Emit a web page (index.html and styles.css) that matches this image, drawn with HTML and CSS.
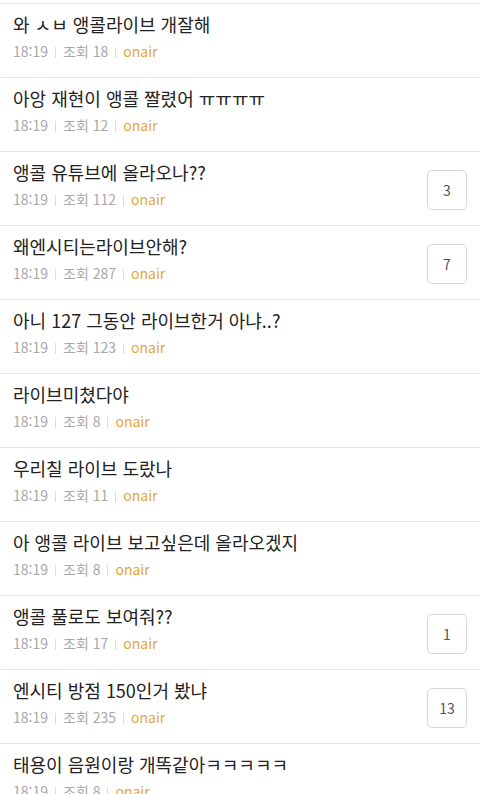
FILE: index.html
```html
<!DOCTYPE html>
<html lang="ko">
<head>
  <meta charset="UTF-8" />
  <title>게시판</title>
  <link rel="stylesheet" href="styles.css">
</head>
<body>
  <ul class="lista">
    <li class="post"><div class="cuerpo"><p class="titulo">와 ㅅㅂ 앵콜라이브 개잘해</p><p class="meta"><span>18:19</span><span>조회 18</span><span class="autor">onair</span></p></div></li>
    <li class="post"><div class="cuerpo"><p class="titulo">아앙 재현이 앵콜 짤렸어 ㅠㅠㅠㅠ</p><p class="meta"><span>18:19</span><span>조회 12</span><span class="autor">onair</span></p></div></li>
    <li class="post"><div class="cuerpo"><p class="titulo">앵콜 유튜브에 올라오나??</p><p class="meta"><span>18:19</span><span>조회 112</span><span class="autor">onair</span></p></div><span class="coment">3</span></li>
    <li class="post"><div class="cuerpo"><p class="titulo">왜엔시티는라이브안해?</p><p class="meta"><span>18:19</span><span>조회 287</span><span class="autor">onair</span></p></div><span class="coment">7</span></li>
    <li class="post"><div class="cuerpo"><p class="titulo">아니 127 그동안 라이브한거 아냐..?</p><p class="meta"><span>18:19</span><span>조회 123</span><span class="autor">onair</span></p></div></li>
    <li class="post"><div class="cuerpo"><p class="titulo">라이브미쳤다야</p><p class="meta"><span>18:19</span><span>조회 8</span><span class="autor">onair</span></p></div></li>
    <li class="post"><div class="cuerpo"><p class="titulo">우리칠 라이브 도랐나</p><p class="meta"><span>18:19</span><span>조회 11</span><span class="autor">onair</span></p></div></li>
    <li class="post"><div class="cuerpo"><p class="titulo">아 앵콜 라이브 보고싶은데 올라오겠지</p><p class="meta"><span>18:19</span><span>조회 8</span><span class="autor">onair</span></p></div></li>
    <li class="post"><div class="cuerpo"><p class="titulo">앵콜 풀로도 보여줘??</p><p class="meta"><span>18:19</span><span>조회 17</span><span class="autor">onair</span></p></div><span class="coment">1</span></li>
    <li class="post"><div class="cuerpo"><p class="titulo">엔시티 방점 150인거 봤냐</p><p class="meta"><span>18:19</span><span>조회 235</span><span class="autor">onair</span></p></div><span class="coment">13</span></li>
    <li class="post"><div class="cuerpo"><p class="titulo">태용이 음원이랑 개똑같아ㅋㅋㅋㅋㅋ</p><p class="meta"><span>18:19</span><span>조회 8</span><span class="autor">onair</span></p></div></li>
  </ul>
</body>
</html>
```

FILE: styles.css
```css
body {
  margin: 0;
  background-color: #ffffff;
  font-family: "Noto Sans CJK KR", "Noto Sans", sans-serif;
  color: #222222;
}
.lista {
  list-style: none;
  margin: 3px 0 0;
  padding: 0;
  border-top: 1px solid #e3e3e3;
}
.post {
  display: flex;
  align-items: flex-start;
  box-sizing: border-box;
  height: 74px;
  padding: 8px 13px 0;
  border-bottom: 1px solid #e3e3e3;
}
.cuerpo {
  flex: 1;
  min-width: 0;
}
.titulo {
  margin: 0;
  font-size: 18px;
  line-height: 24px;
  white-space: nowrap;
  overflow: hidden;
}
.meta {
  margin: 6px 0 0;
  font-size: 14px;
  line-height: 18px;
  color: #a8a8a8;
  display: flex;
  align-items: center;
}
.meta span + span::before {
  content: "";
  display: inline-block;
  width: 1px;
  height: 11px;
  background-color: #dcdcdc;
  margin: 0 7px;
  vertical-align: -1px;
}
.autor {
  color: #e3a63c;
}
.coment {
  flex: none;
  align-self: center;
  margin-top: -6px;
  width: 38px;
  height: 38px;
  border: 1px solid #d8d8d8;
  border-radius: 5px;
  display: flex;
  align-items: center;
  justify-content: center;
  font-size: 14px;
  color: #555555;
}
```
